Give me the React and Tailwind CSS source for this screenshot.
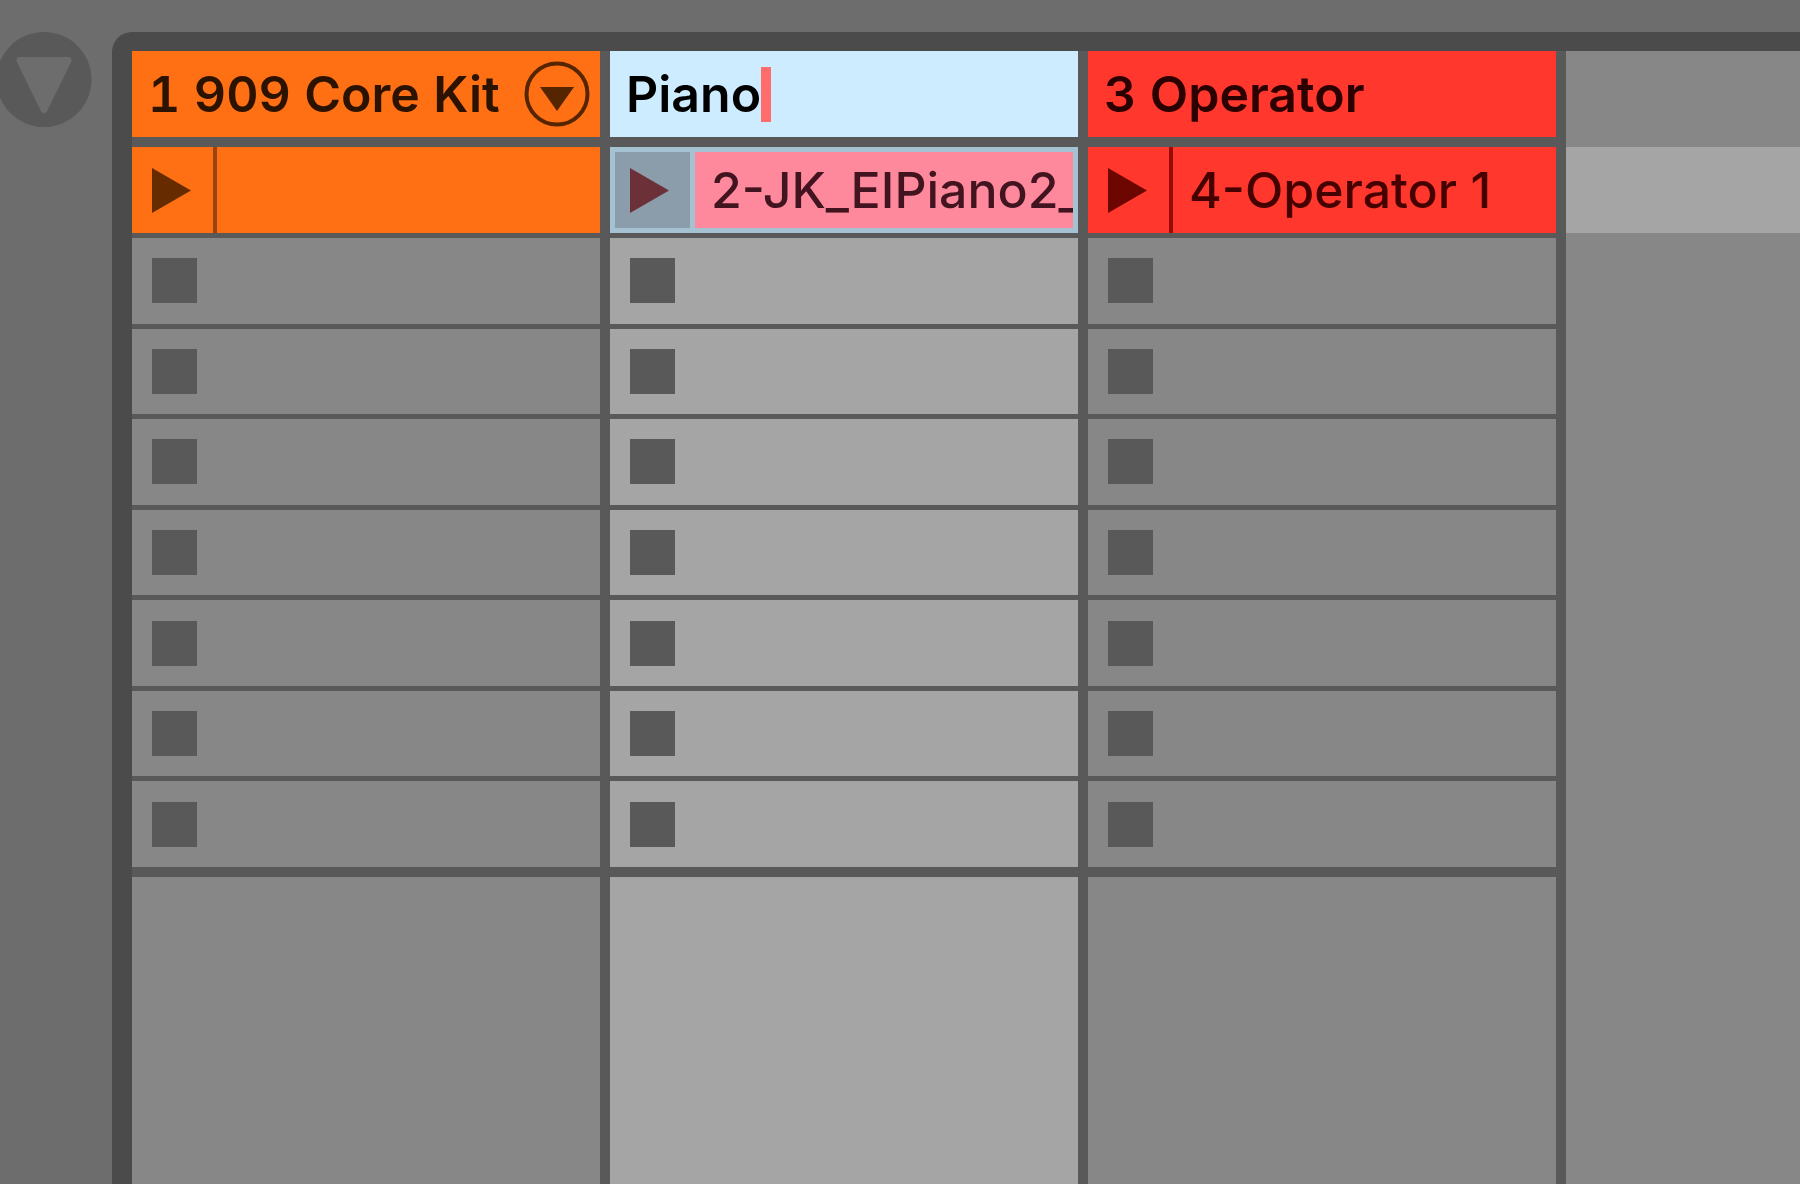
const EMPTY_SLOTS = [1, 2, 3, 4, 5, 6, 7];

function PlayIcon({ className }) {
  return (
    <svg viewBox="0 0 39 45" className={"h-[45px] w-[39px] " + className} aria-hidden="true">
      <path d="M0 0L39 22.5L0 45Z" fill="currentColor" />
    </svg>
  );
}

function SlotList({ track, tone }) {
  return (
    <div className="mt-[5px] grid h-[629px] grid-rows-7 gap-[5px]">
      {EMPTY_SLOTS.map((n) => (
        <div key={n} className={"flex items-center pl-5 " + tone}>
          <button type="button" aria-label={`Stop ${track}, slot ${n + 1}`} className="size-[45px] bg-[#595959]" />
        </div>
      ))}
    </div>
  );
}

function Track({ name, header, clip, tone }) {
  return (
    <section aria-label={name} className="flex min-w-0 flex-col">
      {header}
      {clip}
      <SlotList track={name} tone={tone} />
      <div className={"mt-[10px] flex-1 " + tone} />
    </section>
  );
}

function Clip({ label, className, iconClass, dividerClass }) {
  return (
    <div className={"mt-[10px] flex h-[86px] " + className}>
      <button type="button" aria-label="Launch clip" className="flex w-[81px] shrink-0 items-center pl-5">
        <PlayIcon className={iconClass} />
      </button>
      <div className={"w-1 shrink-0 " + dividerClass} />
      <div className="min-w-0 flex-1 overflow-hidden pl-4 text-[50px]/[86px] font-medium whitespace-nowrap">{label}</div>
    </div>
  );
}

export default function App() {
  return (
    <main className="flex min-h-screen overflow-hidden bg-[#6d6d6d] font-['Inter',sans-serif]">
      <aside className="w-28 shrink-0 pt-8">
        <button type="button" aria-label="Fold tracks" className="-ml-1 block size-24">
          <svg viewBox="0 0 96 96" className="size-24" aria-hidden="true">
            <circle cx="48" cy="47.5" r="47.5" fill="#595959" />
            <path d="M24 28.5H72L48 77.5Z" fill="#6d6d6d" stroke="#6d6d6d" strokeWidth="7" strokeLinejoin="round" />
          </svg>
        </button>
      </aside>

      <div className="mt-8 flex min-w-0 flex-1 rounded-tl-[20px] border-t-[19px] border-l-[20px] border-[#4b4b4b]">
        <div className="grid min-w-0 flex-1 grid-cols-[2fr_2fr_2fr_1fr] gap-[10px] bg-[#595959]">
          <Track
            name="909 Core Kit"
            tone="bg-[#878787]"
            header={
              <header className="flex h-[86px] items-center justify-between bg-[#ff6f14] pr-[10px] pl-4">
                <h2 className="text-[50px]/[86px] font-semibold whitespace-nowrap text-[#2b1300] tabular-nums">
                  1 909 Core Kit
                </h2>
                <button type="button" aria-label="Unfold chain" className="shrink-0">
                  <svg viewBox="0 0 66 66" className="size-[66px]" aria-hidden="true">
                    <circle cx="33" cy="33" r="30.5" fill="none" stroke="#552500" strokeWidth="4" />
                    <path d="M16 26H50L33 50Z" fill="#552500" />
                  </svg>
                </button>
              </header>
            }
            clip={<Clip label="" className="bg-[#ff6f14]" iconClass="text-[#662c00]" dividerClass="bg-[#994310]" />}
          />

          <Track
            name="Piano"
            tone="bg-[#a5a5a5]"
            header={
              <header className="flex h-[86px] items-center bg-[#cdecff] pl-4">
                <input
                  type="text"
                  aria-label="Track name"
                  defaultValue="Piano"
                  className="field-sizing-content h-[86px] max-w-full text-[50px] font-semibold text-black outline-none"
                />
                <span className="h-[55px] w-[10px] bg-[#ff6c6c]" />
              </header>
            }
            clip={
              <div className="mt-[10px] flex h-[86px] gap-[5px] bg-[#a5c2d3] p-[5px]">
                <button
                  type="button"
                  aria-label="Launch clip"
                  className="flex w-[75px] shrink-0 items-center bg-[#8b9dab] pl-[15px]"
                >
                  <PlayIcon className="text-[#6b3038]" />
                </button>
                <div className="min-w-0 flex-1 overflow-hidden bg-[#ff899c] pl-4 text-[50px]/[76px] font-medium whitespace-nowrap text-[#42141f]">
                  2-JK_EIPiano2_
                </div>
              </div>
            }
          />

          <Track
            name="Operator"
            tone="bg-[#878787]"
            header={
              <header className="h-[86px] bg-[#ff372c] pl-4">
                <h2 className="text-[50px]/[86px] font-semibold whitespace-nowrap text-[#2b0000] tabular-nums">
                  3 Operator
                </h2>
              </header>
            }
            clip={
              <Clip
                label="4-Operator 1"
                className="bg-[#ff372c] text-[#450000]"
                iconClass="text-[#6d0600]"
                dividerClass="bg-[#990b05]"
              />
            }
          />

          <div className="bg-[#878787] pt-24">
            <div className="h-[86px] bg-[#a5a5a5]" />
          </div>
        </div>
      </div>
    </main>
  );
}
